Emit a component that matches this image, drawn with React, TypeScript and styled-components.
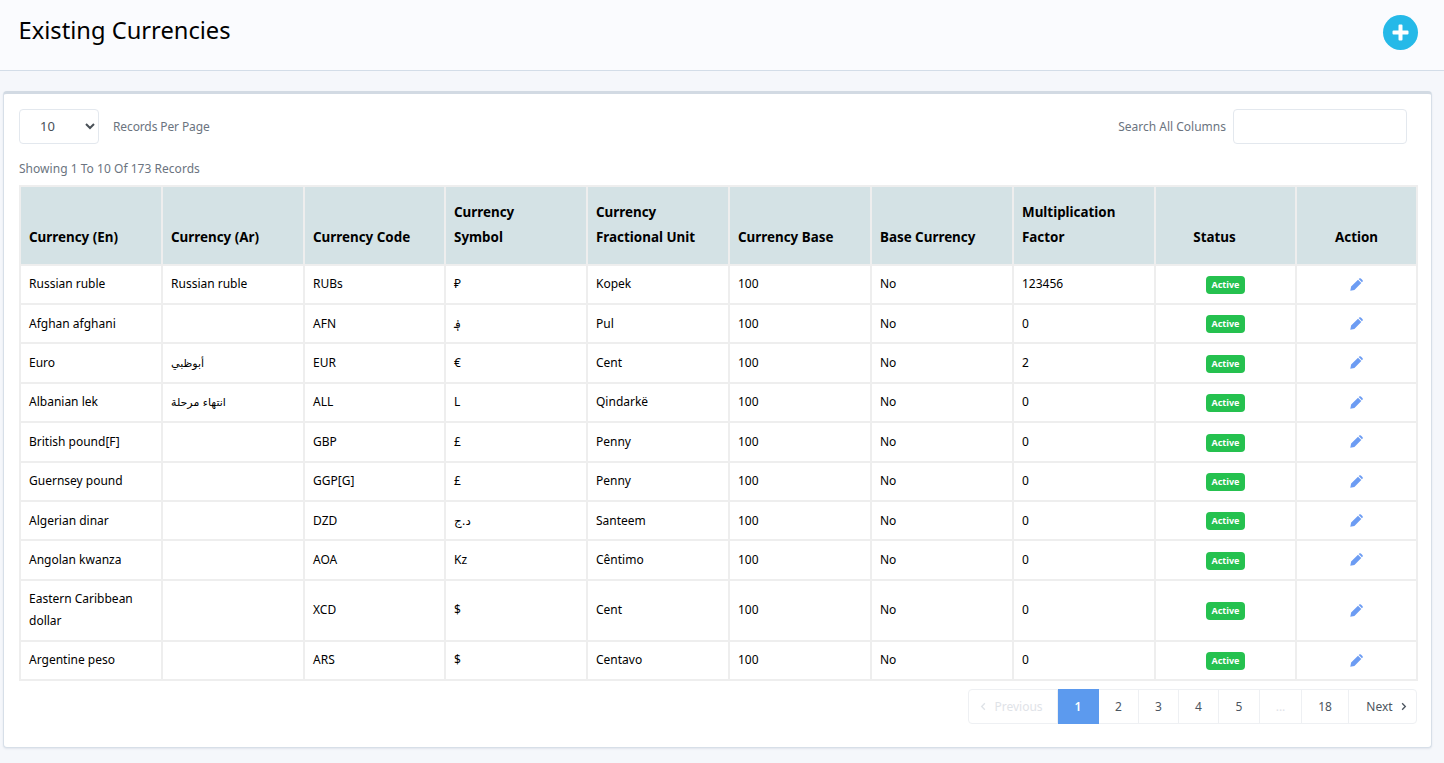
import React from "react";
import styled, { createGlobalStyle } from "styled-components";

const Global = createGlobalStyle`
  html, body { margin: 0; padding: 0; background: #f5f7fb; }
  body { font-family: "Noto Sans", "Open Sans", "Liberation Sans", sans-serif; font-size: 13px; color: #000; }
`;
const Page = styled.div`
  width: 1444px; height: 763px; overflow: hidden; background: #f5f7fb;
`;
const Header = styled.header`
  box-sizing: border-box; height: 71px; background: #fafbfe; border-bottom: 1px solid #d3dde8;
  display: flex; align-items: center; justify-content: space-between;
  padding: 0 26px 10px 18.5px;
`;
const Title = styled.h1`
  margin: 0; font-size: 23.7px; font-weight: 400; line-height: 34px; color: #000;
`;
const AddButton = styled.button`
  width: 35px; height: 35px; margin-top: 4px; border: 0; padding: 0; border-radius: 50%; background: #25b9e8;
  display: flex; align-items: center; justify-content: center;
`;
const Card = styled.section`
  margin: 20px 12px 0 3px; height: 657px; box-sizing: border-box; background: #fff;
  border: 1px solid #d7dfe8; border-top: 3px solid #d2dae3; border-radius: 4px;
  padding: 15px 14px 0 15px; box-shadow: 0 1px 2px rgba(80,100,130,.12);
`;
const Toolbar = styled.div`
  display: flex; justify-content: space-between; align-items: center; height: 35px; padding-right: 10px;
`;
const Group = styled.div`
  display: flex; align-items: center;
`;
const Select = styled.select`
  width: 80px; height: 35px; box-sizing: border-box; background: #fff; border: 1px solid #e3e8ee; border-radius: 4px;
  font: 13px/18px "Noto Sans", sans-serif; color: #495057; padding: 0 0 2px 16px; margin-right: 14px;
`;
const Muted = styled.span`
  color: #6b7480; font-size: 12px; line-height: 18px;
`;
const PerPage = styled(Muted)`letter-spacing: -0.12px;`;
const SearchLabel = styled(Muted)`margin-right: 7px;`;
const Search = styled.input`
  width: 174px; height: 35px; box-sizing: border-box; border: 1px solid #e3e8ee; border-radius: 4px; background: #fff;
`;
const Count = styled(Muted)`
  display: block; margin: 16px 0 7px; letter-spacing: 0.03px;
`;
const Table = styled.table`
  width: 1397px; border-collapse: collapse; table-layout: fixed; margin: 0;
`;
const Th = styled.th<{ $center?: boolean; $w: number; $pr?: number }>`
  width: ${(p) => p.$w}px; background: #d4e2e5; border: 2px solid #eeeeee; padding: 13px ${(p) => p.$pr ?? 8}px 13.6px 8px;
  font-size: 13.4px; font-weight: 700; line-height: 25px; vertical-align: bottom;
  text-align: ${(p) => (p.$center ? "center" : "left")}; box-sizing: border-box;
`;
const Td = styled.td<{ $center?: boolean }>`
  border: 2px solid #eeeeee; padding: 7.5px 8px; line-height: 22px; font-size: 12px; height: 39.4px; box-sizing: border-box;
  vertical-align: middle; text-align: ${(p) => (p.$center ? "center" : "left")}; background: #fff;
`;
const Arabic = styled.span`
  font-family: "DejaVu Sans", sans-serif; font-size: 11px; line-height: 1; display: inline-block;
`;
const ArabicSymbol = styled(Arabic)`font-size: 12px;`;
const Badge = styled.span`
  display: inline-block; height: 18px; line-height: 18px; padding: 0 5.5px; background: #25c14f; color: #fff;
  border-radius: 4px; font-size: 9px; font-weight: 700; vertical-align: middle;
`;
const EditIcon = styled.svg`
  width: 13px; height: 13px; fill: #6c9cf3; display: inline-block; vertical-align: middle; margin-top: -2px;
`;
const Pager = styled.nav`
  display: flex; justify-content: flex-end; margin-top: 8px;
`;
const PagerList = styled.div`
  display: flex; height: 35px; border: 1px solid #eef0f3; border-radius: 4px; box-sizing: border-box; background: #fff;
`;
const PageItem = styled.span<{ $w: number; $active?: boolean; $disabled?: boolean; $last?: boolean; $pl?: number; $pr?: number }>`
  width: ${(p) => p.$w}px; box-sizing: border-box; display: flex; align-items: center; justify-content: center; gap: 6px;
  padding: 0 ${(p) => p.$pr ?? 0}px 0 ${(p) => p.$pl ?? 0}px;
  font-size: 12px; border-right: ${(p) => (p.$last ? "0" : p.$active ? "1px solid #5c9aee" : "1px solid #eef0f3")};
  color: ${(p) => (p.$active ? "#fff" : p.$disabled ? "#dfe3e8" : "#4c5560")};
  background: ${(p) => (p.$active ? "#5c9aee" : "transparent")};
  ${(p) => p.$active && "margin: -1px 0; height: 35px; font-weight: 600;"}
`;
const Chevron = styled.svg`
  width: 9px; height: 9px; fill: none; stroke: currentColor; stroke-width: 1.5;
`;

const headers: [React.ReactNode, number, boolean?, number?][] = [
  ["Currency (En)", 142], ["Currency (Ar)", 142], ["Currency Code", 141],
  [<>Currency<br />Symbol</>, 142], [<>Currency<br />Fractional Unit</>, 142], ["Currency Base", 142], ["Base Currency", 142],
  [<>Multiplication<br />Factor</>, 142], ["Status", 141, true, 30], ["Action", 121, true],
];
const rows: [string, React.ReactNode, string, React.ReactNode, string, string][] = [
  ["Russian ruble", "Russian ruble", "RUBs", "₽", "Kopek", "123456"],
  ["Afghan afghani", "", "AFN", <ArabicSymbol>؋</ArabicSymbol>, "Pul", "0"],
  ["Euro", <Arabic dir="rtl">أبوظبي</Arabic>, "EUR", "€", "Cent", "2"],
  ["Albanian lek", <Arabic dir="rtl">انتهاء مرحلة</Arabic>, "ALL", "L", "Qindarkë", "0"],
  ["British pound[F]", "", "GBP", "£", "Penny", "0"],
  ["Guernsey pound", "", "GGP[G]", "£", "Penny", "0"],
  ["Algerian dinar", "", "DZD", <ArabicSymbol dir="rtl">د.ج</ArabicSymbol>, "Santeem", "0"],
  ["Angolan kwanza", "", "AOA", "Kz", "Cêntimo", "0"],
  ["Eastern Caribbean dollar", "", "XCD", "$", "Cent", "0"],
  ["Argentine peso", "", "ARS", "$", "Centavo", "0"],
];

export default function App() {
  return (
    <Page>
      <Global />
      <Header>
        <Title>Existing Currencies</Title>
        <AddButton aria-label="Add">
          <svg width="17" height="17" viewBox="0 0 17 17"><path d="M6.5 1.5a1 1 0 0 1 1-1h2a1 1 0 0 1 1 1v5h5a1 1 0 0 1 1 1v2a1 1 0 0 1-1 1h-5v5a1 1 0 0 1-1 1h-2a1 1 0 0 1-1-1v-5h-5a1 1 0 0 1-1-1v-2a1 1 0 0 1 1-1h5z" fill="#fff" /></svg>
        </AddButton>
      </Header>
      <Card>
        <Toolbar>
          <Group>
            <Select defaultValue="10"><option>10</option><option>25</option></Select>
            <PerPage>Records Per Page</PerPage>
          </Group>
          <Group>
            <SearchLabel>Search All Columns</SearchLabel>
            <Search />
          </Group>
        </Toolbar>
        <Count>Showing 1 To 10 Of 173 Records</Count>
        <Table>
          <thead>
            <tr>{headers.map(([h, w, c, pr], i) => <Th key={i} $w={w} $center={c} $pr={pr}>{h}</Th>)}</tr>
          </thead>
          <tbody>
            {rows.map((r, i) => (
              <tr key={i}>
                <Td>{r[0]}</Td><Td>{r[1]}</Td><Td>{r[2]}</Td><Td>{r[3]}</Td><Td>{r[4]}</Td>
                <Td>100</Td><Td>No</Td><Td>{r[5]}</Td>
                <Td $center><Badge>Active</Badge></Td>
                <Td $center>
                  <EditIcon viewBox="0 0 13 13"><path d="M.3 12.7l.8-4.1 6.9-6.9 3.3 3.3-6.9 6.9zM8.7 1.1l.5-.5a1.2 1.2 0 0 1 1.7 0l1.5 1.5a1.2 1.2 0 0 1 0 1.7l-.5.5z" /></EditIcon>
                </Td>
              </tr>
            ))}
          </tbody>
        </Table>
        <Pager>
          <PagerList>
            <PageItem $w={89} $disabled $pr={4}><Chevron viewBox="0 0 10 10"><path d="M6.5 1.5 3 5l3.5 3.5" /></Chevron>Previous</PageItem>
            <PageItem $w={41} $active>1</PageItem>
            <PageItem $w={40}>2</PageItem>
            <PageItem $w={40}>3</PageItem>
            <PageItem $w={40}>4</PageItem>
            <PageItem $w={41}>5</PageItem>
            <PageItem $w={42} $disabled>...</PageItem>
            <PageItem $w={47}>18</PageItem>
            <PageItem $w={67} $last $pl={9}>Next<Chevron viewBox="0 0 10 10"><path d="M3.5 1.5 7 5 3.5 8.5" /></Chevron></PageItem>
          </PagerList>
        </Pager>
      </Card>
    </Page>
  );
}
